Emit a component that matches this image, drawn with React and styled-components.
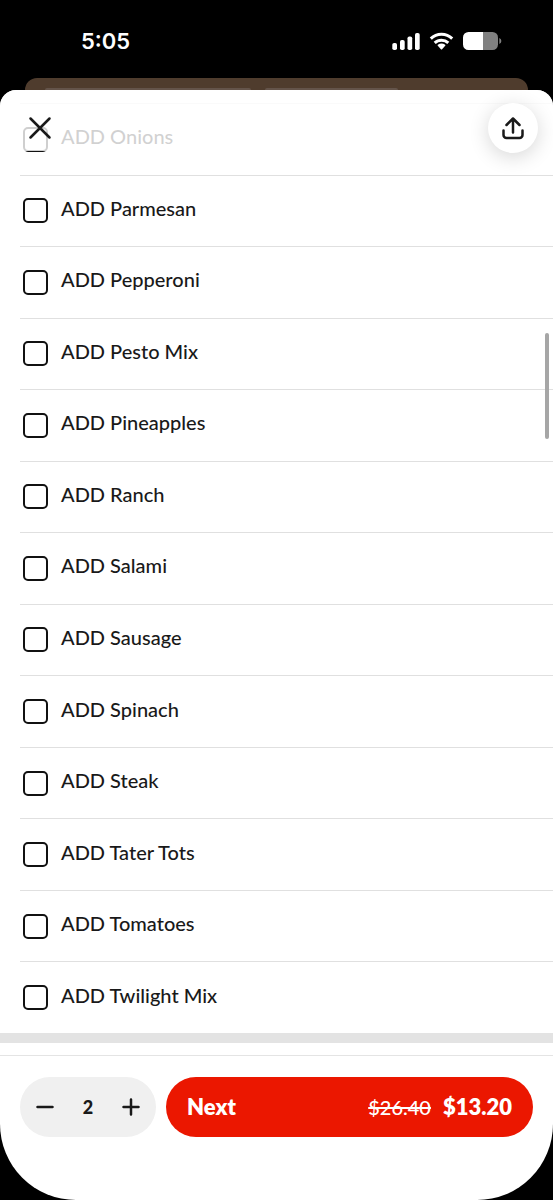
import React, { useState } from 'react'
import styled, { createGlobalStyle } from 'styled-components'

const OPTIONS = [
  'ADD Onions',
  'ADD Parmesan',
  'ADD Pepperoni',
  'ADD Pesto Mix',
  'ADD Pineapples',
  'ADD Ranch',
  'ADD Salami',
  'ADD Sausage',
  'ADD Spinach',
  'ADD Steak',
  'ADD Tater Tots',
  'ADD Tomatoes',
  'ADD Twilight Mix',
]

const UNIT_PRICE = 6.6
const UNIT_FULL_PRICE = 13.2

const money = (value) => `$${value.toFixed(2)}`

function StatusIcons() {
  return (
    <svg width="112" height="20" viewBox="0 0 112 20" aria-hidden="true">
      <g fill="#fff">
        <rect x="1.300" y="12" width="4.700" height="7" rx="1.800" />
        <rect x="9" y="9" width="4.700" height="10" rx="1.800" />
        <rect x="16.500" y="5.500" width="4.700" height="13.500" rx="1.800" />
        <rect x="24" y="2" width="4.700" height="17" rx="1.800" />
        <path d="M54.200 13.800a6.500 6.500 0 0 0-7.400 0a.6.6 0 0 0 0 .9l3.100 3.500a.8.8 0 0 0 1.200 0l3.100-3.500a.6.6 0 0 0 0-.9z" />
      </g>
      <g fill="none" stroke="#fff" strokeWidth="3">
        <path d="M39.800 7.600a15.500 15.500 0 0 1 21.400 0" />
        <path d="M43.700 11.900a9.900 9.900 0 0 1 13.600 0" />
      </g>
      <path d="M92 1h9.500a5.500 5.500 0 0 1 5.500 5.500v7a5.500 5.500 0 0 1-5.500 5.500H92z" fill="#808080" />
      <path d="M92 1H77.500a5.500 5.500 0 0 0-5.500 5.500v7A5.500 5.500 0 0 0 77.500 19H92z" fill="#fff" />
      <path d="M108.300 7a3.200 3.200 0 0 1 0 6z" fill="#808080" />
    </svg>
  )
}

function App() {
  const [selected, setSelected] = useState([])
  const [quantity, setQuantity] = useState(2)

  const toggle = (name) => {
    setSelected((prev) =>
      prev.includes(name) ? prev.filter((n) => n !== name) : [...prev, name]
    )
  }

  return (
    <>
      <GlobalStyle />
      <Screen>
        <StatusBar>
          <Time>5:05</Time>
          <StatusIcons />
        </StatusBar>

        <PreviousCard>
          <PreviousTab $grow={206} />
          <PreviousTab $grow={132} />
          <PreviousSpace />
        </PreviousCard>

        <Sheet>
          <Options>
            {OPTIONS.map((name) => (
              <Option key={name}>
                <Checkbox
                  type="checkbox"
                  checked={selected.includes(name)}
                  onChange={() => toggle(name)}
                />
                <OptionName>{name}</OptionName>
              </Option>
            ))}
          </Options>

          <SectionGap />

          <Footer>
            <Stepper>
              <StepButton
                aria-label="Decrease quantity"
                onClick={() => setQuantity(Math.max(1, quantity - 1))}
              >
                <svg width="20" height="20" viewBox="0 0 20 20">
                  <path d="M2.500 10h15" />
                </svg>
              </StepButton>
              <Quantity>{quantity}</Quantity>
              <StepButton
                aria-label="Increase quantity"
                onClick={() => setQuantity(quantity + 1)}
              >
                <svg width="20" height="20" viewBox="0 0 20 20">
                  <path d="M2.500 10h15M10 2.500v15" />
                </svg>
              </StepButton>
            </Stepper>
            <NextButton>
              <span>Next</span>
              <Prices>
                <OldPrice>{money(UNIT_FULL_PRICE * quantity)}</OldPrice>
                <span>{money(UNIT_PRICE * quantity)}</span>
              </Prices>
            </NextButton>
          </Footer>

          <Header>
            <CloseButton aria-label="Close">
              <svg width="24" height="24" viewBox="0 0 24 24">
                <path d="M2.500 2.500l19 19M21.500 2.500l-19 19" />
              </svg>
            </CloseButton>
            <ShareButton aria-label="Share">
              <svg width="24" height="24" viewBox="0 0 24 24">
                <path d="M12 16.500V2.500M5.500 9L12 2.500L18.500 9M2.500 14.500v4.500a3 3 0 0 0 3 3h13a3 3 0 0 0 3-3v-4.500" />
              </svg>
            </ShareButton>
          </Header>
          <ScrollThumb />
        </Sheet>
      </Screen>
    </>
  )
}

export default App

const GlobalStyle = createGlobalStyle`
  * {
    box-sizing: border-box;
  }
  body {
    margin: 0;
    background: #000;
    color: #191919;
    font-family: Lato, 'Liberation Sans', sans-serif;
  }
  button {
    border: 0;
    padding: 0;
    background: none;
    color: inherit;
    font: inherit;
    cursor: pointer;
  }
  svg {
    display: block;
  }
`

const Screen = styled.div`
  display: flex;
  flex-direction: column;
  min-height: 100vh;
`

const StatusBar = styled.div`
  display: flex;
  align-items: center;
  justify-content: space-between;
  height: 78px;
  padding: 4px 50px 0 81px;
  color: #fff;
`

const Time = styled.span`
  font-family: Inter, sans-serif;
  font-size: 22px;
  font-weight: 600;
  line-height: 24px;
`

const PreviousCard = styled.div`
  display: flex;
  align-items: flex-end;
  gap: 14px;
  height: 12px;
  margin: 0 25px;
  padding: 0 20px;
  border-radius: 12px 12px 0 0;
  background: #4f3c2d;
`

const PreviousTab = styled.div`
  flex: ${({ $grow }) => $grow} 1 0;
  height: 2px;
  border-radius: 4px 4px 0 0;
  background: #64544a;
`

const PreviousSpace = styled.div`
  flex: 96 1 0;
`

const Sheet = styled.main`
  position: relative;
  display: flex;
  flex: 1;
  flex-direction: column;
  padding-top: 13px;
  border-radius: 16px 16px 76px 76px;
  background: #fff;
  overflow: hidden;
`

const Header = styled.header`
  position: absolute;
  inset: 0 0 auto;
  display: flex;
  align-items: flex-start;
  justify-content: space-between;
  height: 61px;
  padding: 13px 15px 0 28px;
  background: rgba(255, 255, 255, 0.8);
`

const iconStroke = `
  path {
    fill: none;
    stroke: #191919;
    stroke-width: 2.5;
    stroke-linecap: round;
    stroke-linejoin: round;
  }
`

const CloseButton = styled.button`
  padding: 13px 0;
  ${iconStroke}
`

const ShareButton = styled.button`
  display: flex;
  align-items: center;
  justify-content: center;
  width: 50px;
  height: 50px;
  border-radius: 50%;
  background: #fff;
  box-shadow: 0 4px 20px rgba(0, 0, 0, 0.16);
  ${iconStroke}
`

const Options = styled.div`
  display: flex;
  flex: 1;
  flex-direction: column;
  margin-left: 20px;
  border-top: 1px solid #e4e4e4;
`

const Option = styled.label`
  display: flex;
  flex: 1 0 0;
  align-items: center;
  gap: 13px;
  min-height: 48px;
  padding-left: 3px;
  border-bottom: 1px solid #e0e0e0;
  cursor: pointer;

  &:last-child {
    border-bottom: 0;
  }
`

const Checkbox = styled.input`
  appearance: none;
  width: 25px;
  height: 25px;
  margin: 0;
  border: 2px solid #111;
  border-radius: 5px;
  background: #fff;

  &:checked {
    background: #191919;
  }
`

const OptionName = styled.span`
  padding-bottom: 6px;
  font-size: 20px;
  font-weight: 500;
  line-height: 24px;
`

const SectionGap = styled.div`
  height: 10px;
  margin-bottom: 12px;
  background: #e3e3e3;
`

const Footer = styled.footer`
  display: flex;
  gap: 10px;
  padding: 21px 20px 63px;
  border-top: 1px solid #e4e4e4;
`

const Stepper = styled.div`
  display: flex;
  align-items: center;
  justify-content: space-between;
  width: 136px;
  height: 60px;
  padding: 0 15px;
  border-radius: 30px;
  background: #f0f0f0;
`

const StepButton = styled.button`
  ${iconStroke}
`

const Quantity = styled.span`
  font-size: 18px;
  font-weight: 900;
  line-height: 24px;
`

const NextButton = styled.button`
  display: flex;
  flex: 1;
  align-items: center;
  justify-content: space-between;
  height: 60px;
  padding: 0 21px;
  border-radius: 30px;
  background: #eb1700;

  && {
    color: #fff;
    font-size: 22px;
    font-weight: 800;
    line-height: 24px;
  }
`

const Prices = styled.span`
  display: flex;
  align-items: center;
  gap: 12px;
`

const OldPrice = styled.s`
  font-size: 20px;
  font-weight: 500;
`

const ScrollThumb = styled.div`
  position: absolute;
  top: 243px;
  right: 4px;
  width: 4px;
  height: 106px;
  border-radius: 2px;
  background: #a6a6a6;
`
